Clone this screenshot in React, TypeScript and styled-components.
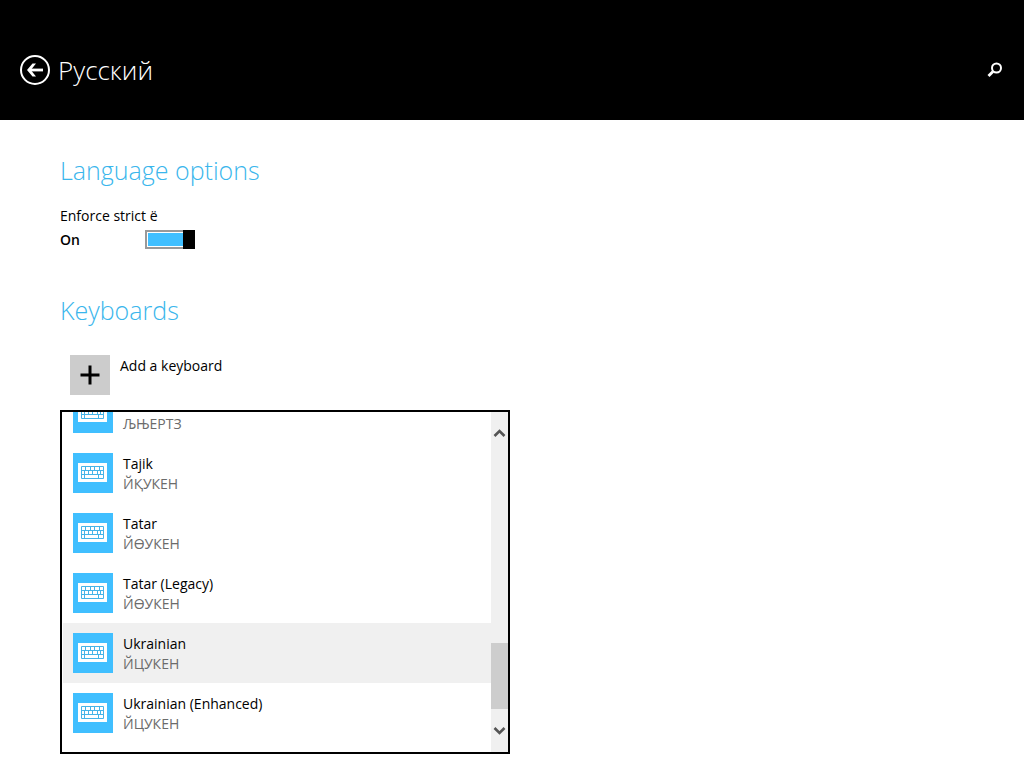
import React, { useState } from "react";
import styled, { createGlobalStyle } from "styled-components";

const GlobalStyle = createGlobalStyle`
  *, *::before, *::after { box-sizing: border-box; }
  body {
    margin: 0;
    background: #fff;
    color: #000;
    font: 14px/20px "Open Sans", "Noto Sans", sans-serif;
  }
  button, input { font: inherit; color: inherit; margin: 0; }
`;

const Page = styled.div`
  display: flex;
  flex-direction: column;
  height: 100vh;
  min-height: 640px;
`;

const Header = styled.header`
  display: flex;
  align-items: center;
  flex: none;
  height: 120px;
  padding: 20px 20px 0;
  background: #000;
  color: #fff;
`;

const IconButton = styled.button`
  display: flex;
  padding: 0;
  border: 0;
  background: none;
  cursor: pointer;
`;

const Title = styled.h1`
  flex: 1;
  margin: 0 0 0 8px;
  font-size: 26px;
  line-height: 36px;
  font-weight: 300;
`;

const Main = styled.main`
  display: flex;
  flex: 1;
  flex-direction: column;
  min-height: 0;
  padding: 32px 60px 14px;
`;

const Heading = styled.h2`
  margin: 0;
  font-size: 25px;
  line-height: 36px;
  font-weight: 300;
  color: #3ab6ec;
`;

const Setting = styled.div`
  display: flex;
  flex-direction: column;
  gap: 4px;
  margin: 18px 0 42px;
`;

const SwitchRow = styled.div`
  display: flex;
  align-items: flex-start;
`;

const SwitchState = styled.span`
  width: 85px;
  font-weight: 600;
`;

const Switch = styled.input`
  appearance: none;
  width: 50px;
  height: 19px;
  border: 2px solid #999;
  background: ${(p) => (p.checked ? "#40bfff" : "#a6a6a6")};
  box-shadow: inset 0 0 0 1px #fff;
  display: flex;
  justify-content: ${(p) => (p.checked ? "flex-end" : "flex-start")};
  cursor: pointer;

  &::before {
    content: "";
    width: 12px;
    margin: -2px;
    background: #000;
  }
`;

const AddButton = styled.button`
  display: flex;
  align-self: flex-start;
  gap: 10px;
  margin: 27px 0 15px;
  padding: 0 10px;
  border: 0;
  background: none;
  text-align: left;
  cursor: pointer;
`;

const Tile = styled.span<{ $tone: string }>`
  display: flex;
  flex: none;
  align-items: center;
  justify-content: center;
  width: 40px;
  height: 40px;
  background: ${(p) => p.$tone};
`;

const Flyout = styled.div`
  display: flex;
  flex: 1;
  min-height: 0;
  width: 100%;
  max-width: 450px;
  border: 2px solid #000;
  background: #fff;
`;

const List = styled.ul`
  display: flex;
  flex: 1;
  flex-direction: column;
  justify-content: flex-end;
  margin: 0;
  padding: 0 0 9px 1px;
  overflow: hidden;
  list-style: none;
`;

const Row = styled.button<{ $active?: boolean }>`
  display: flex;
  gap: 10px;
  width: 100%;
  height: 60px;
  padding: 10px;
  border: 0;
  background: ${(p) => (p.$active ? "#f0f0f0" : "transparent")};
  text-align: left;
  cursor: pointer;
`;

const Labels = styled.span`
  display: flex;
  flex-direction: column;
  padding-top: 1px;
`;

const Layout = styled.span`
  color: #6b6b6b;
`;

const Scrollbar = styled.div`
  display: flex;
  flex-direction: column;
  width: 17px;
  background: #f0f0f0;
`;

const ScrollButton = styled.button`
  display: flex;
  align-items: center;
  justify-content: center;
  height: 43px;
  padding: 0;
  border: 0;
  background: none;
`;

const Track = styled.div`
  display: flex;
  flex: 1;
  flex-direction: column;
  justify-content: flex-end;
`;

const Thumb = styled.div`
  height: 66px;
  background: #cdcdcd;
`;

const BackIcon = () => (
  <svg width="30" height="30" viewBox="0 0 30 30" fill="none" stroke="#fff" aria-hidden="true">
    <circle cx="15" cy="15" r="14" strokeWidth="2" />
    <path d="M23 15H9" strokeWidth="2.800" />
    <path d="M7 15l5.500-6.500h3.500L10.800 15l5.200 6.500h-3.500z" fill="#fff" stroke="none" />
  </svg>
);

const SearchIcon = () => (
  <svg width="18" height="18" viewBox="0 0 18 18" fill="none" stroke="#fff" aria-hidden="true">
    <circle cx="10.500" cy="7" r="4.500" strokeWidth="2" />
    <path d="M7 10.500L2.500 15" strokeWidth="2.800" />
  </svg>
);

const PlusIcon = () => (
  <svg width="20" height="20" viewBox="0 0 20 20" stroke="#000" strokeWidth="3" aria-hidden="true">
    <path d="M10 .5v19M.5 10h19" />
  </svg>
);

const KeyboardIcon = () => (
  <svg width="30" height="20" viewBox="0 0 30 20" aria-hidden="true">
    <path d="M0 0h29v19H0z" fill="#fff" />
    <path
      d="M3.500 3.500h22v12h-22zM3.500 7.500h22M3.500 11.500h22M7.500 3.500v4M12.500 3.500v4M16.500 3.500v4M21.500 3.500v4M6.500 7.500v4M10.500 7.500v4M14.500 7.500v4M19.500 7.500v4M22.500 7.500v4M6.500 11.500v4M20.500 11.500v4"
      fill="none"
      stroke="#45b4e8"
    />
  </svg>
);

const Chevron = ({ down }: { down?: boolean }) => (
  <svg width="13" height="9" viewBox="0 0 13 9" fill="none" stroke="#555" strokeWidth="2.600" aria-hidden="true">
    <path d={down ? "M1.500 2l5 5 5-5" : "M1.500 7l5-5 5 5"} />
  </svg>
);

const keyboards = [
  { name: "Serbian", layout: "ЉЊЕРТЗ" },
  { name: "Tajik", layout: "ЙҚУКЕН" },
  { name: "Tatar", layout: "ЙӨУКЕН" },
  { name: "Tatar (Legacy)", layout: "ЙӨУКЕН" },
  { name: "Ukrainian", layout: "ЙЦУКЕН" },
  { name: "Ukrainian (Enhanced)", layout: "ЙЦУКЕН" },
];

export default function App() {
  const [strict, setStrict] = useState(true);
  const [active, setActive] = useState("Ukrainian");

  return (
    <>
      <GlobalStyle />
      <Page>
        <Header>
          <IconButton aria-label="Back"><BackIcon /></IconButton>
          <Title>Русский</Title>
          <IconButton aria-label="Search"><SearchIcon /></IconButton>
        </Header>
        <Main>
          <Heading>Language options</Heading>
          <Setting>
            <label htmlFor="strict">Enforce strict ё</label>
            <SwitchRow>
              <SwitchState>{strict ? "On" : "Off"}</SwitchState>
              <Switch
                id="strict"
                type="checkbox"
                role="switch"
                checked={strict}
                onChange={(e) => setStrict(e.target.checked)}
              />
            </SwitchRow>
          </Setting>
          <Heading>Keyboards</Heading>
          <AddButton>
            <Tile $tone="#ccc"><PlusIcon /></Tile>
            <Labels>Add a keyboard</Labels>
          </AddButton>
          <Flyout>
            <List>
              {keyboards.map((k) => (
                <li key={k.name}>
                  <Row $active={k.name === active} onClick={() => setActive(k.name)}>
                    <Tile $tone="#40bfff"><KeyboardIcon /></Tile>
                    <Labels>
                      <span>{k.name}</span>
                      <Layout>{k.layout}</Layout>
                    </Labels>
                  </Row>
                </li>
              ))}
            </List>
            <Scrollbar>
              <ScrollButton aria-label="Scroll up"><Chevron /></ScrollButton>
              <Track><Thumb /></Track>
              <ScrollButton aria-label="Scroll down"><Chevron down /></ScrollButton>
            </Scrollbar>
          </Flyout>
        </Main>
      </Page>
    </>
  );
}
